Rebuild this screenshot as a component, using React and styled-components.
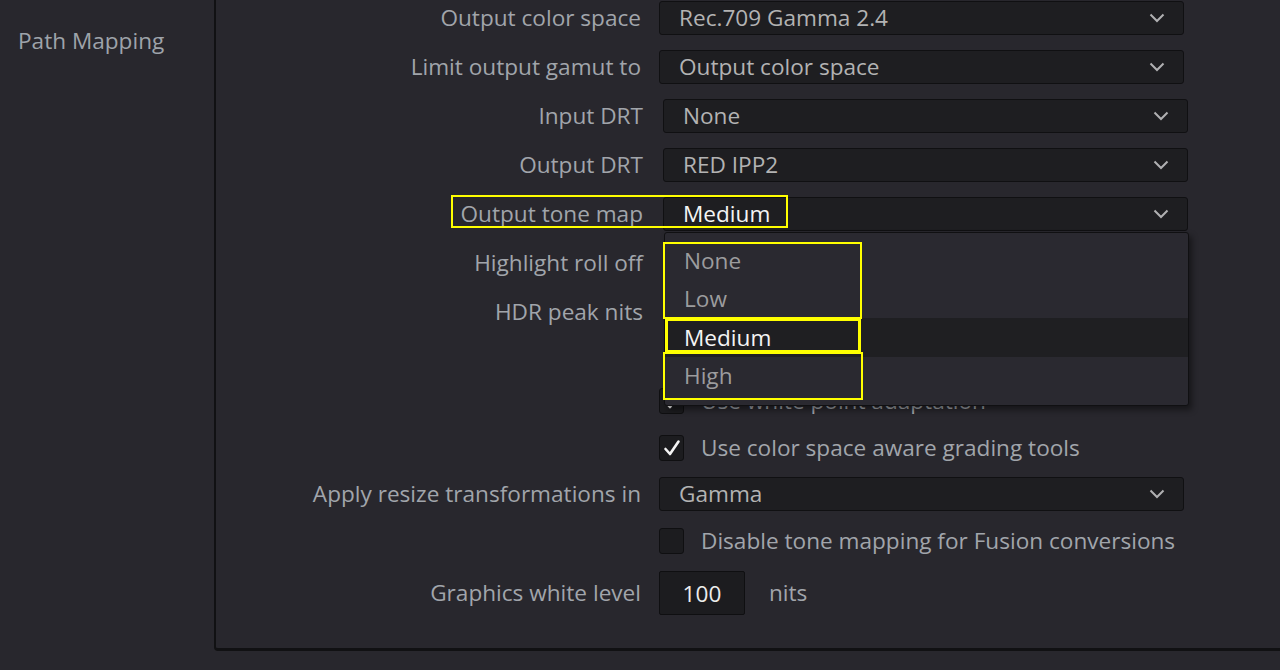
import styled, { createGlobalStyle } from "styled-components";

const GlobalStyle = createGlobalStyle`
  html, body {
    margin: 0;
    padding: 0;
    background: #28272d;
    font-family: "Open Sans", "Noto Sans", sans-serif;
  }
  * { box-sizing: border-box; }
`;

const Page = styled.div`
  position: relative;
  display: flex;
  width: 1280px;
  height: 670px;
  overflow: hidden;
  background: #28272d;
`;

const Sidebar = styled.aside`
  width: 214px;
  flex-shrink: 0;
  padding: 26px 0 0 18px;
`;

const SideItem = styled.div`
  font-size: 22.6px;
  line-height: 30px;
  color: #9ea3aa;
`;

const Panel = styled.section`
  flex: 1;
  height: 651px;
  margin-right: -12px;
  border-left: 2px solid #111113;
  border-bottom: 3px solid #111113;
  border-bottom-left-radius: 4px;
`;

const Row = styled.div`
  display: grid;
  grid-template-columns: ${(p) => 425 + (p.$shift ? 2 : 0)}px auto;
  column-gap: ${(p) => 18 + (p.$shift ? 2 : 0)}px;
  align-items: center;
  height: ${(p) => p.$h || 34}px;
  margin-top: ${(p) => p.$mt ?? 15}px;
`;

const Label = styled.div`
  text-align: right;
  font-size: 22.6px;
  line-height: 30px;
  padding-bottom: 1px;
  color: #a1a5ab;
  white-space: nowrap;
`;

const Control = styled.div`
  position: relative;
  display: flex;
  align-items: center;
  gap: ${(p) => p.$gap || 0}px;
`;

const Select = styled.div`
  position: relative;
  display: flex;
  align-items: center;
  justify-content: space-between;
  width: 525px;
  height: 34px;
  padding: 0 18px 1px 19px;
  background: #1e1e21;
  border: 1px solid #101012;
  border-radius: 3px;
  font-size: 22.6px;
  color: ${(p) => (p.$active ? "#f4f4f4" : "#b3b3b3")};
`;

const Menu = styled.ul`
  position: absolute;
  top: 34px;
  left: 0;
  z-index: 5;
  width: 525px;
  margin: 0;
  padding: 8px 0 10px;
  list-style: none;
  background: #2a2930;
  border: 1px solid #101012;
  border-radius: 3px;
  box-shadow: 3px 4px 6px rgba(0, 0, 0, 0.45);
`;

const MenuItem = styled.li`
  height: 38.5px;
  display: flex;
  align-items: center;
  padding-left: 19px;
  font-size: 22.6px;
  color: ${(p) => (p.$selected ? "#f4f4f4" : "#9c9c9e")};
  background: ${(p) => (p.$selected ? "#1f1f22" : "transparent")};
`;

const Box = styled.div`
  width: 25px;
  height: 26px;
  display: flex;
  align-items: center;
  justify-content: center;
  background: #1c1c1f;
  border: 1px solid #0f0f11;
  border-radius: 3px;
`;

const CheckText = styled.span`
  font-size: 22.6px;
  line-height: 30px;
  padding-bottom: 1px;
  color: #a1a5ab;
  white-space: nowrap;
`;

const NumberBox = styled.div`
  width: 86px;
  height: 44px;
  display: flex;
  align-items: center;
  justify-content: center;
  background: #1c1c1f;
  border: 1px solid #0f0f11;
  border-radius: 2px;
  font-size: 22.6px;
  color: #ececec;
`;

const Mark = styled.div`
  position: absolute;
  z-index: 10;
  left: ${(p) => p.$x}px;
  top: ${(p) => p.$y}px;
  width: ${(p) => p.$w}px;
  height: ${(p) => p.$hh}px;
  border: ${(p) => p.$t || 2}px solid #ffff00;
  pointer-events: none;
`;

function Chevron() {
  return (
    <svg width="16" height="10" viewBox="0 0 16 10">
      <polyline
        points="1.5,1.5 8,8 14.5,1.5"
        fill="none"
        stroke="#b0b0b2"
        strokeWidth="2"
      />
    </svg>
  );
}

function Tick() {
  return (
    <svg width="18" height="18" viewBox="0 0 18 18">
      <path
        d="M2.5 10 L7 15 L15.5 2.5"
        fill="none"
        stroke="#f5f5f5"
        strokeWidth="2.6"
        strokeLinecap="round"
        strokeLinejoin="round"
      />
    </svg>
  );
}

function Dropdown({ value, active, children }) {
  return (
    <Select $active={active}>
      <span>{value}</span>
      <Chevron />
      {children}
    </Select>
  );
}

function Check({ checked, text }) {
  return (
    <Control $gap={17}>
      <Box>{checked && <Tick />}</Box>
      <CheckText>{text}</CheckText>
    </Control>
  );
}

const toneOptions = ["None", "Low", "Medium", "High"];

export default function App() {
  return (
    <>
      <GlobalStyle />
      <Page>
        <Sidebar>
          <SideItem>Path Mapping</SideItem>
        </Sidebar>
        <Panel>
          <Row $mt={1}>
            <Label>Output color space</Label>
            <Dropdown value="Rec.709 Gamma 2.4" />
          </Row>
          <Row>
            <Label>Limit output gamut to</Label>
            <Dropdown value="Output color space" />
          </Row>
          <Row $shift>
            <Label>Input DRT</Label>
            <Dropdown value="None" />
          </Row>
          <Row $shift>
            <Label>Output DRT</Label>
            <Dropdown value="RED IPP2" />
          </Row>
          <Row $shift>
            <Label>Output tone map</Label>
            <Dropdown value="Medium" active>
              <Menu>
                {toneOptions.map((o) => (
                  <MenuItem key={o} $selected={o === "Medium"}>
                    {o}
                  </MenuItem>
                ))}
              </Menu>
            </Dropdown>
          </Row>
          <Row $shift>
            <Label>Highlight roll off</Label>
            <Control />
          </Row>
          <Row $shift>
            <Label>HDR peak nits</Label>
            <Control />
          </Row>
          <Row $mt={16}>
            <Label />
            <Control />
          </Row>
          <Row $mt={5}>
            <Label />
            <Check checked text="Use white point adaptation" />
          </Row>
          <Row $mt={13}>
            <Label />
            <Check checked text="Use color space aware grading tools" />
          </Row>
          <Row $mt={12}>
            <Label>Apply resize transformations in</Label>
            <Dropdown value="Gamma" />
          </Row>
          <Row $mt={13}>
            <Label />
            <Check text="Disable tone mapping for Fusion conversions" />
          </Row>
          <Row $mt={13} $h={44}>
            <Label>Graphics white level</Label>
            <Control $gap={24}>
              <NumberBox>100</NumberBox>
              <CheckText>nits</CheckText>
            </Control>
          </Row>
        </Panel>
        <Mark $x={451} $y={195} $w={337} $hh={33} />
        <Mark $x={663} $y={242} $w={199} $hh={77} />
        <Mark $x={665} $y={318} $w={196} $hh={35} $t={3} />
        <Mark $x={663} $y={352} $w={200} $hh={48} />
      </Page>
    </>
  );
}
